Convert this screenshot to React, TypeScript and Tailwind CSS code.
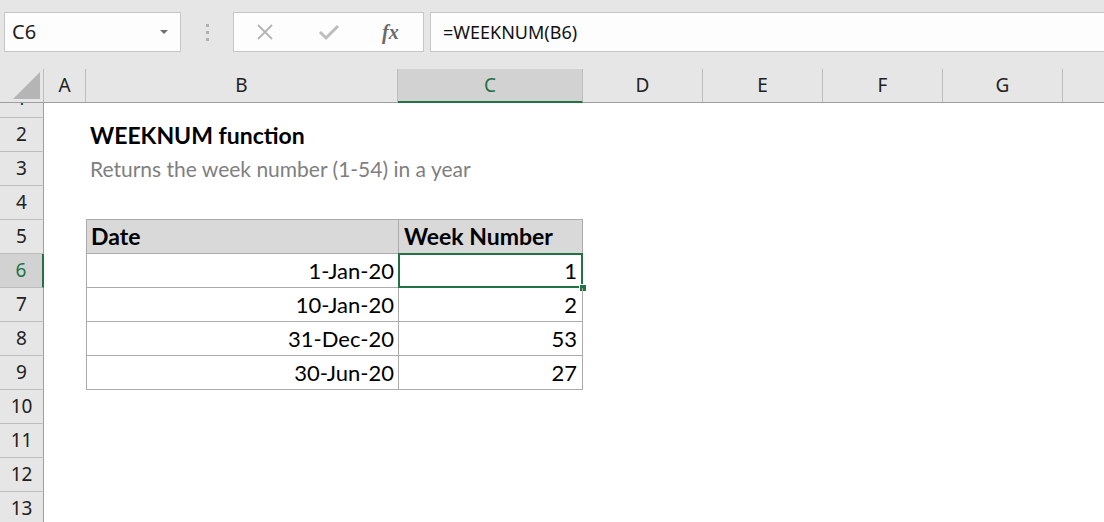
import React from 'react';

const cellFont = { fontFamily: 'Lato, "Open Sans", sans-serif' };
const uiFont = { fontFamily: '"Noto Sans", "Open Sans", sans-serif' };

const cols = [
  { key: 'A', w: 'w-[42px]' },
  { key: 'B', w: 'w-[312px]' },
  { key: 'C', w: 'w-[185px]' },
  { key: 'D', w: 'w-[120px]' },
  { key: 'E', w: 'w-[120px]' },
  { key: 'F', w: 'w-[120px]' },
  { key: 'G', w: 'w-[120px]' },
];

const data = [
  { date: '1-Jan-20', week: '1' },
  { date: '10-Jan-20', week: '2' },
  { date: '31-Dec-20', week: '53' },
  { date: '30-Jun-20', week: '27' },
];

function RowHead({ n, selected }: { n: number; selected?: boolean }) {
  return (
    <div
      className={
        'w-[44px] h-[34px] shrink-0 flex items-center justify-center border-b border-[#bdbdbd] text-[19px]' +
        (selected
          ? ' bg-[#d2d2d2] text-[#217346] border-r-2 border-r-[#217346]'
          : ' bg-[#e6e6e6] text-[#222] border-r border-r-[#9f9f9f]')
      }
      style={uiFont}
    >
      {n}
    </div>
  );
}

export default function App() {
  return (
    <div className="w-[1104px] h-[522px] overflow-hidden bg-white select-none">
      {/* toolbar */}
      <div className="h-[69px] bg-[#e6e6e6] flex items-start pt-[12px]">
        <div className="ml-[4px] w-[177px] h-[40px] bg-[#fdfdfd] border border-[#c6c6c6] flex items-center pl-[7px] pr-[12px]">
          <span className="text-[20px] text-[#222] flex-1" style={uiFont}>
            C6
          </span>
          <span className="w-0 h-0 border-l-[4px] border-r-[4px] border-t-[4px] border-l-transparent border-r-transparent border-t-[#6f6f6f]" />
        </div>
        <div className="w-[52px] h-[40px] flex flex-col items-center justify-center gap-[4px]">
          <span className="w-[3px] h-[3px] bg-[#b0b0b0]" />
          <span className="w-[3px] h-[3px] bg-[#b0b0b0]" />
          <span className="w-[3px] h-[3px] bg-[#b0b0b0]" />
        </div>
        <div className="w-[191px] h-[40px] bg-[#fdfdfd] border border-[#c6c6c6] flex items-center">
          <svg className="ml-[22px]" width="18" height="18" viewBox="0 0 18 18">
            <path d="M2 2 L16 16 M16 2 L2 16" stroke="#b4b4b4" strokeWidth="1.8" fill="none" />
          </svg>
          <svg className="ml-[44px]" width="22" height="18" viewBox="0 0 22 18">
            <path d="M2 9 L8 15 L20 3" stroke="#bdbdbd" strokeWidth="3" fill="none" />
          </svg>
          <span
            className="ml-[42px] text-[20px] italic text-[#6a6a6a] font-semibold"
            style={{ fontFamily: '"Liberation Serif", serif' }}
          >
            fx
          </span>
        </div>
        <div className="ml-[6px] flex-1 h-[40px] bg-[#fdfdfd] border border-r-0 border-[#c6c6c6] flex items-center pl-[12px]">
          <span className="text-[18px] text-[#111]" style={uiFont}>
            =WEEKNUM(B6)
          </span>
        </div>
      </div>

      {/* column headers */}
      <div className="flex h-[34px] bg-[#e6e6e6] border-b border-[#9f9f9f] text-[19px]" style={uiFont}>
        <div className="w-[44px] shrink-0 border-r border-[#bdbdbd] relative">
          <svg className="absolute right-[3px] bottom-[3px]" width="27" height="27" viewBox="0 0 27 27">
            <path d="M27 0 L27 27 L0 27 Z" fill="#b5b5b5" />
          </svg>
        </div>
        {cols.map((c) =>
          c.key === 'C' ? (
            <div
              key={c.key}
              className={c.w + ' shrink-0 flex items-center justify-center bg-[#d2d2d2] text-[#217346] border-r border-[#bdbdbd] border-b-2 border-b-[#217346] -mb-px'}
            >
              {c.key}
            </div>
          ) : (
            <div key={c.key} className={c.w + ' shrink-0 flex items-center justify-center text-[#222] border-r border-[#bdbdbd]'}>
              {c.key}
            </div>
          )
        )}
        <div className="flex-1" />
      </div>

      {/* row 1, scrolled half out of view */}
      <div className="flex h-[15px] overflow-hidden">
        <div
          className="w-[44px] shrink-0 bg-[#e6e6e6] border-r border-[#9f9f9f] border-b border-b-[#bdbdbd] flex items-end justify-center text-[19px] leading-[38px] overflow-hidden text-[#222]"
          style={uiFont}
        >
          1
        </div>
      </div>

      {/* row 2 */}
      <div className="flex h-[34px]">
        <RowHead n={2} />
        <div className="w-[42px] shrink-0" />
        <div className="pl-[4px] flex items-center text-[23px] font-bold text-black whitespace-nowrap" style={cellFont}>
          WEEKNUM function
        </div>
      </div>

      {/* row 3 */}
      <div className="flex h-[34px]">
        <RowHead n={3} />
        <div className="w-[42px] shrink-0" />
        <div className="pl-[4px] flex items-center text-[21px] text-[#7f7f7f] whitespace-nowrap" style={cellFont}>
          Returns the week number (1-54) in a year
        </div>
      </div>

      {/* row 4 */}
      <div className="flex h-[34px]">
        <RowHead n={4} />
      </div>

      {/* row 5 - table header */}
      <div className="flex h-[34px]" style={cellFont}>
        <RowHead n={5} />
        <div className="w-[42px] shrink-0" />
        <div className="w-[312px] shrink-0 mt-[-1px] h-[35px] bg-[#d9d9d9] border border-r-0 border-[#ababab] flex items-center pl-[4px] text-[23px] font-bold text-black">
          Date
        </div>
        <div className="w-[185px] shrink-0 mt-[-1px] h-[35px] bg-[#d9d9d9] border border-[#ababab] flex items-center pl-[5px] text-[23px] font-bold text-black whitespace-nowrap">
          Week Number
        </div>
      </div>

      {data.map((r, i) => (
        <div key={r.date} className="flex h-[34px]" style={cellFont}>
          <RowHead n={6 + i} selected={i === 0} />
          <div className="w-[42px] shrink-0" />
          <div className="w-[312px] shrink-0 border-l border-b border-[#ababab] flex items-center justify-end pr-[4px] text-[22px] text-black">
            {r.date}
          </div>
          <div className="w-[185px] shrink-0 border-x border-b border-[#ababab] flex items-center justify-end pr-[5px] text-[22px] text-black relative">
            {r.week}
            {i === 0 && (
              <>
                <div className="absolute left-[-1px] right-[-1px] top-[-1px] bottom-[-1px] border-2 border-[#217346]" />
                <div className="absolute right-[-5px] bottom-[-5px] w-[8px] h-[8px] bg-[#217346] border border-white" />
              </>
            )}
          </div>
        </div>
      ))}

      {[10, 11, 12, 13].map((n) => (
        <div key={n} className="flex h-[34px]">
          <RowHead n={n} />
        </div>
      ))}
    </div>
  );
}
